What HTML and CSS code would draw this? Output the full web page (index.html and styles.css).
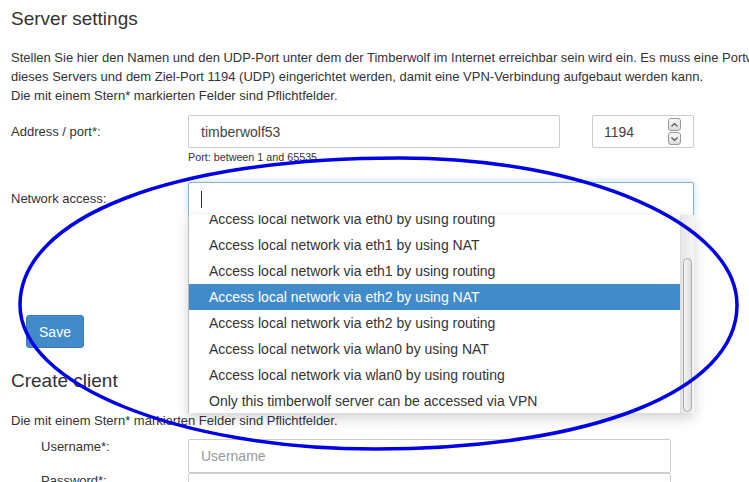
FILE: index.html
```html
<!DOCTYPE html>
<html lang="en">
<head>
    <meta charset="UTF-8">
    <meta name="viewport" content="width=device-width, initial-scale=1.0">
    <title>Server settings</title>
    <link rel="stylesheet" href="styles.css">
</head>
<body>
    <div class="page">
        <h2 class="section-title">Server settings</h2>
        <p class="intro">
            Stellen Sie hier den Namen und den UDP-Port unter dem der Timberwolf im Internet erreichbar sein wird ein. Es muss eine Portweiterleitung zu<br>
            dieses Servers und dem Ziel-Port 1194 (UDP) eingerichtet werden, damit eine VPN-Verbindung aufgebaut werden kann.<br>
            Die mit einem Stern* markierten Felder sind Pflichtfelder.
        </p>

        <div class="form-row">
            <label class="form-label">Address / port*:</label>
            <div class="form-field">
                <div class="address-group">
                    <input class="text-input address-input" type="text" value="timberwolf53">
                    <div class="port-box">
                        <span class="port-value">1194</span>
                        <span class="spinner">
                            <span class="spin-btn"><svg width="9" height="6" viewBox="0 0 9 6"><polyline points="1.5,4.5 4.5,1.5 7.5,4.5" fill="none" stroke="#555" stroke-width="1.2"/></svg></span>
                            <span class="spin-btn"><svg width="9" height="6" viewBox="0 0 9 6"><polyline points="1.5,1.5 4.5,4.5 7.5,1.5" fill="none" stroke="#555" stroke-width="1.2"/></svg></span>
                        </span>
                    </div>
                </div>
                <div class="help-text">Port: between 1 and 65535</div>
            </div>
        </div>

        <div class="form-row network-row">
            <label class="form-label">Network access:</label>
            <div class="form-field combo">
                <div class="text-input combo-input focused"><span class="caret"></span></div>
                <div class="dropdown">
                    <ul class="options">
                        <li>Access local network via eth0 by using routing</li>
                        <li>Access local network via eth1 by using NAT</li>
                        <li>Access local network via eth1 by using routing</li>
                        <li class="selected">Access local network via eth2 by using NAT</li>
                        <li>Access local network via eth2 by using routing</li>
                        <li>Access local network via wlan0 by using NAT</li>
                        <li>Access local network via wlan0 by using routing</li>
                        <li>Only this timberwolf server can be accessed via VPN</li>
                    </ul>
                    <div class="scrollbar"><div class="scroll-thumb"></div></div>
                </div>
            </div>
        </div>

        <button class="save-btn">Save</button>

        <h2 class="section-title client-title">Create client</h2>
        <p class="note">Die mit einem Stern* markierten Felder sind Pflichtfelder.</p>

        <div class="client-fields">
            <div class="client-row">
                <label class="client-label">Username*:</label>
                <input class="text-input client-input" type="text" placeholder="Username">
            </div>
            <div class="client-row">
                <label class="client-label">Password*:</label>
                <input class="text-input client-input" type="password">
            </div>
        </div>
    </div>

    <!-- hand drawn marker round the dropdown -->
    <svg class="marker" width="749" height="482" viewBox="0 0 749 482">
        <path d="M20,305 C20,217 172,158 400,158 C586,158 737,224 737,305 C737,391 592,449 375,449 C180,449 20,385 20,305 Z"
              fill="none" stroke="#0000e6" stroke-width="3.5"/>
    </svg>
</body>
</html>
```

FILE: styles.css
```css
body {
    font-family: "Liberation Sans", Arial, sans-serif;
    color: #333;
    background: #fff;
    margin: 0;
    padding: 0;
    overflow: hidden;
    height: 482px;
    position: relative;
}

.page {
    padding: 0 11px;
}

.section-title {
    font-size: 19px;
    font-weight: normal;
    line-height: 21px;
    margin: 8px 0 0;
}

.intro {
    font-size: 13px;
    line-height: 19px;
    margin: 19px 0 0;
    white-space: nowrap;
}

.form-row {
    display: flex;
    align-items: flex-start;
    margin-top: 10px;
}

.form-label {
    width: 177px;
    flex-shrink: 0;
    font-size: 13px;
    line-height: 33px;
}

.form-field {
    width: 506px;
}

.text-input {
    box-sizing: border-box;
    height: 33px;
    border: 1px solid #ccc;
    border-radius: 2px;
    padding: 0 12px;
    font-family: inherit;
    font-size: 14px;
    color: #444;
    background: #fff;
    outline: none;
}

.address-group {
    display: flex;
    gap: 32px;
}

.address-input {
    width: 372px;
}

.port-box {
    box-sizing: border-box;
    width: 102px;
    height: 33px;
    border: 1px solid #ccc;
    border-radius: 2px;
    display: flex;
    align-items: center;
    justify-content: space-between;
    padding: 0 12px 0 11px;
    font-size: 14px;
    color: #444;
}

.spinner {
    display: flex;
    flex-direction: column;
    gap: 1px;
}

.spin-btn {
    width: 11px;
    height: 11px;
    border: 1px solid #999;
    border-radius: 3px;
    background: linear-gradient(#f8f8f8, #ddd);
    display: flex;
    align-items: center;
    justify-content: center;
}

.help-text {
    font-size: 10.75px;
    line-height: 14px;
    margin-top: 2px;
}

.network-row {
    margin-top: 18px;
}

.combo {
    position: relative;
}

.combo-input {
    width: 506px;
    height: 34px;
    display: flex;
    align-items: center;
}

.combo-input.focused {
    border-color: #8fb3d2;
    box-shadow: 0 0 7px rgba(102, 175, 233, 0.45);
}

.caret {
    width: 1px;
    height: 17px;
    background: #333;
}

.dropdown {
    position: absolute;
    top: 33px;
    left: 0;
    box-sizing: border-box;
    width: 506px;
    height: 198px;
    background: #fff;
    border-left: 1px solid #bbb;
    box-shadow: 0 5px 12px rgba(0, 0, 0, 0.18);
    overflow: hidden;
    display: flex;
    z-index: 2;
}

.options {
    list-style: none;
    margin: -9px 0 0;
    padding: 0;
    flex: 1;
}

.options li {
    height: 26px;
    line-height: 26px;
    padding-left: 20px;
    font-size: 14px;
    color: #333;
    white-space: nowrap;
}

.options li.selected {
    background: #428bca;
    color: #fff;
}

.scrollbar {
    width: 13px;
    flex-shrink: 0;
    background: linear-gradient(to right, #e6e6e6, #f6f6f6);
    border-left: 1px solid #ddd;
    position: relative;
}

.scroll-thumb {
    position: absolute;
    left: 2px;
    right: 2px;
    top: 43px;
    bottom: 1px;
    border: 1px solid #aaa;
    border-radius: 5px;
    background: linear-gradient(to right, #f4f4f4, #dedede);
}

.save-btn {
    display: block;
    margin: 99px 0 0 15px;
    width: 58px;
    height: 33px;
    border: 1px solid #3a7cb8;
    border-radius: 3px;
    background: #428bca;
    color: #fff;
    font-family: inherit;
    font-size: 14px;
    padding: 0;
}

.client-title {
    margin-top: 22px;
}

.note {
    font-size: 13px;
    line-height: 19px;
    margin: 20px 0 0;
}

.client-fields {
    margin-top: 9px;
}

.client-row {
    display: flex;
    align-items: flex-start;
}

.client-label {
    width: 147px;
    padding-left: 30px;
    flex-shrink: 0;
    font-size: 13px;
    line-height: 16px;
}

.client-input {
    width: 483px;
    height: 34px;
}

.client-input::placeholder {
    color: #999;
}

.marker {
    position: absolute;
    top: 0;
    left: 0;
    pointer-events: none;
    z-index: 5;
}
```
